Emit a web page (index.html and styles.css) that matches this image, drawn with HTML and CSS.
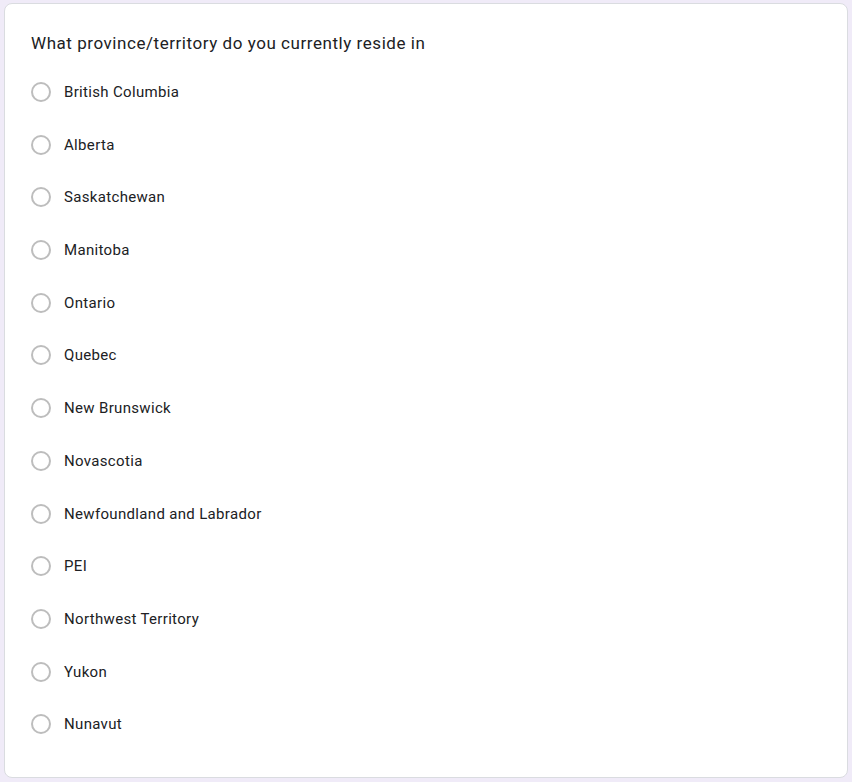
FILE: index.html
```html
<!DOCTYPE html>
<html>
<head>
<meta charset="utf-8">
<link rel="stylesheet" href="styles.css">
</head>
<body>
<div class="card">
  <div class="title">What province/territory do you currently reside in</div>
  <div class="options">
    <label class="opt"><span class="radio"></span><span class="lbl">British Columbia</span></label>
    <label class="opt"><span class="radio"></span><span class="lbl">Alberta</span></label>
    <label class="opt"><span class="radio"></span><span class="lbl">Saskatchewan</span></label>
    <label class="opt"><span class="radio"></span><span class="lbl">Manitoba</span></label>
    <label class="opt"><span class="radio"></span><span class="lbl">Ontario</span></label>
    <label class="opt"><span class="radio"></span><span class="lbl">Quebec</span></label>
    <label class="opt"><span class="radio"></span><span class="lbl">New Brunswick</span></label>
    <label class="opt"><span class="radio"></span><span class="lbl">Novascotia</span></label>
    <label class="opt"><span class="radio"></span><span class="lbl">Newfoundland and Labrador</span></label>
    <label class="opt"><span class="radio"></span><span class="lbl">PEI</span></label>
    <label class="opt"><span class="radio"></span><span class="lbl">Northwest Territory</span></label>
    <label class="opt"><span class="radio"></span><span class="lbl">Yukon</span></label>
    <label class="opt"><span class="radio"></span><span class="lbl">Nunavut</span></label>
  </div>
</div>
</body>
</html>
```
FILE: styles.css
```css
html, body {
  margin: 0;
  padding: 0;
  background: #f0ebf8;
  height: 100%;
}
body {
  padding: 3px 4px 4px 4px;
  box-sizing: border-box;
  font-family: Roboto, "Liberation Sans", sans-serif;
}
.card {
  background: #fff;
  border: 1px solid #dadce0;
  border-radius: 8px;
  height: 775px;
  box-sizing: border-box;
  padding: 28px 26px 0 26px;
}
.title {
  font-size: 17px;
  line-height: 22px;
  color: #202124;
  letter-spacing: 0.55px;
}
.options {
  display: flex;
  flex-direction: column;
  margin-top: 11.8px;
}
.opt {
  display: flex;
  align-items: center;
  height: 52.68px;
}
.radio {
  width: 20px;
  height: 20px;
  box-sizing: border-box;
  border: 2px solid #bdbdbd;
  border-radius: 50%;
  flex: none;
}
.lbl {
  margin-left: 13px;
  font-size: 15px;
  letter-spacing: 0.33px;
  color: #202124;
  line-height: 20px;
}
```
